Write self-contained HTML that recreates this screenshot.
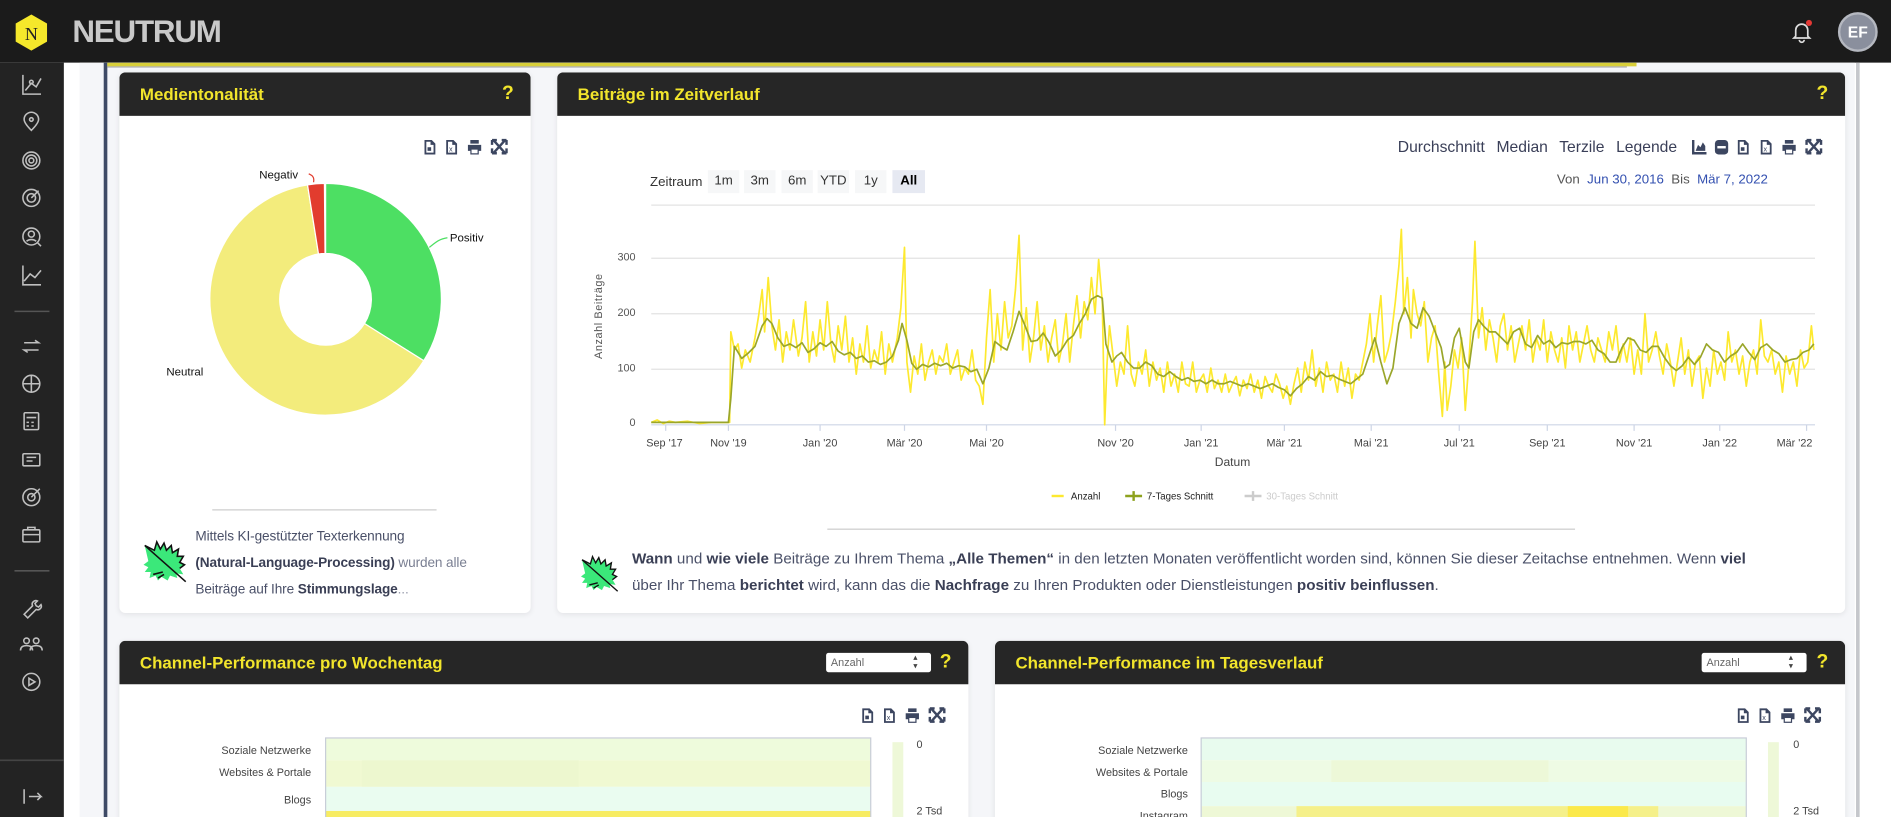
<!DOCTYPE html>
<html><head><meta charset="utf-8">
<style>
*{box-sizing:border-box;margin:0;padding:0}
html,body{width:1891px;height:817px;overflow:hidden;background:#fff}
#s{position:absolute;left:0;top:0;width:1568px;height:677px;transform:scale(1.20599,1.2068);transform-origin:0 0;font-family:"Liberation Sans",sans-serif;background:#fff;overflow:hidden}
.abs{position:absolute}
.hdr{left:0;top:0;width:1568px;height:52px;background:#1b1b1b}
.side{left:0;top:52px;width:53px;height:625px;background:#232323}
.card{position:absolute;background:#fff;border-radius:5px;box-shadow:0 1px 5px rgba(0,0,0,.08);overflow:hidden}
.ch{height:36px;background:#262626;color:#f2e52c;font-weight:bold;font-size:14px;padding:0 0 0 17px;line-height:36px;position:relative}
.q{position:absolute;right:14px;top:0;color:#f2e52c;font-size:16px;font-weight:bold}
.sel{position:absolute;top:10px;width:87px;height:16px;background:#fff;border-radius:2px;font-size:9px;color:#666;line-height:16px;padding-left:4px;font-weight:normal}
.sel:after{content:"▴▾";position:absolute;right:6px;top:0;font-size:7px;letter-spacing:-1px;writing-mode:vertical-lr;color:#444}
.txt{font-size:12px;color:#4a5068;line-height:22px}
.txt b{color:#3a3f55}
.ic{fill:#3c4660}
</style></head><body><div id="s">
<div class="abs hdr"></div>
<svg class="abs" style="left:11px;top:11px" width="30" height="32" viewBox="0 0 30 32"><polygon points="15,1 28,8.5 28,23.5 15,31 2,23.5 2,8.5" fill="#f5e82b"/><text x="15" y="22" text-anchor="middle" font-family="Liberation Serif,serif" font-size="15" fill="#222">N</text></svg>
<div class="abs" style="left:60px;top:11px;font-size:26px;font-weight:bold;color:#c9c9c9;letter-spacing:-1px">NEUTRUM</div>
<svg class="abs" style="left:1484px;top:16px" width="20" height="20" viewBox="0 0 20 20"><path d="M5 14V9a5 5 0 0 1 10 0v5l1.5 1.5h-13z M8 17a2 2 0 0 0 4 0" fill="none" stroke="#ddd" stroke-width="1.4"/><circle cx="16" cy="3" r="2.5" fill="#e53935"/></svg>
<div class="abs" style="left:1524px;top:10px;width:33px;height:33px;border-radius:50%;background:#8a8f9d;border:2px solid #b5b8c0;color:#fff;font-weight:bold;font-size:13px;text-align:center;line-height:29px">EF</div>
<div class="abs side"></div>
<svg class="abs" style="left:0;top:52px" width="53" height="625" viewBox="0 52 53 625" fill="none" stroke="#bfbfbf" stroke-width="1.3">
<path d="M19 62v16h15M21 75l5-6 4 3 4-7"/><circle cx="26" cy="68" r="1.5"/>
<path d="M26 108c-4-4-6-7-6-9a6 6 0 0 1 12 0c0 2-2 5-6 9z"/><circle cx="26" cy="99" r="1.5"/>
<circle cx="26" cy="133" r="7"/><circle cx="26" cy="133" r="4.5"/><circle cx="26" cy="133" r="2"/>
<circle cx="26" cy="164" r="7"/><circle cx="26" cy="164" r="3.5"/><path d="M26 164l6-6"/>
<circle cx="26" cy="196" r="7"/><circle cx="26" cy="194" r="2.5"/><path d="M22 200c2-2 6-2 8 0M31 201l3 3"/>
<path d="M19 220v16h15M20 233l5-6 4 3 5-6"/>
<path d="M12 258h29" stroke="#555"/>
<path d="M20 284h12l-3-2M32 290H20l3 2"/>
<circle cx="26" cy="318" r="7"/><path d="M19 318h14M26 311v14"/>
<rect x="20" y="342" width="12" height="14" rx="1"/><path d="M22 346h8M22 350h2M26 350h2M22 353h2M26 353h2"/>
<rect x="19" y="376" width="14" height="10" rx="1"/><path d="M22 379h8M22 382h5"/>
<circle cx="26" cy="412" r="7"/><circle cx="26" cy="412" r="3"/><path d="M26 412l7-7"/>
<rect x="19" y="439" width="14" height="10" rx="1"/><path d="M23 439v-2h6v2M19 443h14"/>
<path d="M12 473h29" stroke="#555"/>
<path d="M20 509l7-7a3 3 0 0 1 4-4l-2 2 1 2 2 1 2-2a3 3 0 0 1-4 4l-7 7z"/>
<circle cx="22" cy="531" r="2.3"/><circle cx="30" cy="531" r="2.3"/><path d="M17 539c0-3 2-4 5-4s5 1 5 4M25 539c0-3 2-4 5-4s5 1 5 4"/>
<circle cx="26" cy="565" r="7"/><path d="M24 562v6l5-3z"/>
<path d="M0 630h53" stroke="#444"/>
<path d="M20 654v12M24 660h10l-3-3M34 660l-3 3"/>
</svg>
<div class="abs" style="left:53px;top:52px;width:1515px;height:625px;background:#fff"></div>
<div class="abs" style="left:66px;top:52px;width:1472px;height:625px;background:#f5f6f9"></div>
<div class="abs" style="left:86px;top:52px;width:3px;height:625px;background:#3e4a66"></div>
<div class="abs" style="left:89px;top:52px;width:1268px;height:3px;background:#d8cf3a"></div>
<div class="abs" style="left:89px;top:55px;width:1260px;height:1px;background:#aaa"></div>
<div class="abs" style="left:1539px;top:52px;width:3px;height:625px;background:#c5c7cc"></div>

<div class="card" style="left:99px;top:60px;width:341px;height:448px">
<div class="ch">Medientonalität<span class="q">?</span></div>
</div>
<svg class="abs" style="left:350px;top:115px" width="80" height="14" viewBox="0 0 80 14">
<path class="ic" d="M2 1h6l3 3v9H2z M3.5 2.5v9h6V5H7V2.5z"/><rect x="4.5" y="7" width="3" height="3" class="ic"/>
<path class="ic" d="M20 1h6l3 3v9h-9z M21.5 2.5v9h6V5H25V2.5z"/><text x="22.3" y="10.5" font-size="6" fill="#3c4660">x</text>
<path class="ic" d="M40 1h7v3h-7z M38 5h11v5h-2v3h-7v-3h-2z"/><rect x="41" y="9" width="5" height="3" fill="#fff"/>
<path d="M59 1l10 11M69 1L59 12M58 1h4M58 1v4M70 1h-4M70 1v4M58 12h4M58 12v-4M70 12h-4M70 12v-4" stroke="#3c4660" stroke-width="2" fill="none"/>
</svg>
<svg class="abs" style="left:99px;top:96px" width="341" height="300">
<g transform="translate(-99,-96)">
<path d="M270 152A96 96 0 0 1 351.4 298.9L302.2 268.1A38 38 0 0 0 270 210Z" fill="#4ddf63" stroke="#fff" stroke-width="1"/>
<path d="M351.4 298.9A96 96 0 1 1 255 153.2L264.1 210.5A38 38 0 1 0 302.2 268.1Z" fill="#f3ec7c" stroke="#fff" stroke-width="1"/>
<path d="M255 153.2A96 96 0 0 1 269 152L269.5 210A38 38 0 0 0 264.1 210.5Z" fill="#e23c2e" stroke="#fff" stroke-width="1"/>
<path d="M260 151c1-5-2-6-4-7" stroke="#e23c2e" fill="none"/>
<path d="M356 205c5-4 8-7 15-8" stroke="#4ddf63" fill="none"/>
<text x="215" y="148" font-size="9.5" fill="#111">Negativ</text>
<text x="373" y="200" font-size="9.5" fill="#111">Positiv</text>
<text x="138" y="311" font-size="9.5" fill="#111">Neutral</text>
</g></svg>
<div class="abs" style="left:176px;top:422px;width:186px;height:1px;background:#ccc"></div>
<svg class="abs" style="left:117px;top:446px" width="46" height="40" viewBox="0 0 46 40"><path d="M3 6l8 4 2-7 3 6 3-5 2 6 4-4 1 6 5-3-1 6 5 0-3 5 4 2-4 3 3 5-6-1 1 4-6-2-2 4-5-3-3 3-2-4-5 2 1-5-5 0 3-4-4-2 4-3z" fill="#3be87a"/><path d="M3 6l8 4 2-7 3 6 3-5 2 6 4-4 1 6 5-3-1 6 5 0-3 5 4 2-4 3M3 6l34 30M10 30l8-2M14 33l5-3" stroke="#111" stroke-width="1.3" fill="none"/></svg>
<div class="abs txt" style="left:162px;top:434px;width:274px;font-size:11.3px;letter-spacing:-0.1px">Mittels KI-gestützter Texterkennung<br><b>(Natural-Language-Processing)</b> <span style="color:#7a7f92">wurden alle</span><br>Beiträge auf Ihre <b>Stimmungslage</b><span style="color:#9a9eae">...</span></div>

<div class="card" style="left:462px;top:60px;width:1068px;height:448px">
<div class="ch">Beiträge im Zeitverlauf<span class="q">?</span></div>
</div>
<div class="abs" style="left:1159px;top:114px;font-size:13px;color:#3a3f58;word-spacing:6px">Durchschnitt Median Terzile Legende</div>
<svg class="abs" style="left:1402px;top:115px" width="110" height="14" viewBox="0 0 110 14">
<path class="ic" d="M1 1v12h12v-2H3V1z M4 10l2-5 2 2 2-4 2 3v4z"/>
<rect x="20" y="1" width="11" height="12" rx="3" class="ic"/><rect x="22" y="6" width="7" height="2" fill="#fff"/>
<g transform="translate(37,0)"><path class="ic" d="M2 1h6l3 3v9H2z M3.5 2.5v9h6V5H7V2.5z"/><rect x="4.5" y="7" width="3" height="3" class="ic"/></g>
<g transform="translate(38,0)"><path class="ic" d="M20 1h6l3 3v9h-9z M21.5 2.5v9h6V5H25V2.5z"/><text x="22.3" y="10.5" font-size="6" fill="#3c4660">x</text></g>
<g transform="translate(38,0)"><path class="ic" d="M40 1h7v3h-7z M38 5h11v5h-2v3h-7v-3h-2z"/><rect x="41" y="9" width="5" height="3" fill="#fff"/></g>
<g transform="translate(38,0)"><path d="M59 1l10 11M69 1L59 12M58 1h4M58 1v4M70 1h-4M70 1v4M58 12h4M58 12v-4M70 12h-4M70 12v-4" stroke="#3c4660" stroke-width="2" fill="none"/></g>
</svg>
<div class="abs" style="left:539px;top:144px;font-size:11px;color:#333;line-height:14px">Zeitraum</div>
<div class="abs" style="left:587px;top:141px;font-size:11px;color:#333">
<span class="abs" style="left:0;width:26px;height:19px;background:#f6f7f8;text-align:center;line-height:19px">1m</span>
<span class="abs" style="left:30px;width:26px;height:19px;background:#f6f7f8;text-align:center;line-height:19px">3m</span>
<span class="abs" style="left:61px;width:26px;height:19px;background:#f6f7f8;text-align:center;line-height:19px">6m</span>
<span class="abs" style="left:91px;width:26px;height:19px;background:#f6f7f8;text-align:center;line-height:19px">YTD</span>
<span class="abs" style="left:122px;width:26px;height:19px;background:#f6f7f8;text-align:center;line-height:19px">1y</span>
<span class="abs" style="left:153px;width:27px;height:19px;background:#e6e9f2;text-align:center;line-height:19px;font-weight:bold;color:#000">All</span>
</div>
<div class="abs" style="left:1291px;top:143px;font-size:11px;color:#555;white-space:nowrap">Von &nbsp;<span style="color:#3350b0">Jun 30, 2016</span> &nbsp;Bis &nbsp;<span style="color:#3350b0">Mär 7, 2022</span></div>
<svg class="abs" style="left:462px;top:160px" width="1068" height="270">
<g transform="translate(-462,-160)">
<g stroke="#e3e3e3" stroke-width="1"><path d="M540 170H1505M540 214H1505M540 260H1505M540 306H1505"/></g>
<path d="M540 352H1505" stroke="#cdd5e6"/>
<g stroke="#cdd5e6"><path d="M552 352v5M604 352v5M680 352v5M750 352v5M818 352v5M925 352v5M996 352v5M1065 352v5M1137 352v5M1210 352v5M1283 352v5M1355 352v5M1426 352v5M1498 352v5"/></g>
<g font-size="9" fill="#555" text-anchor="end"><text x="527" y="216">300</text><text x="527" y="262">200</text><text x="527" y="308">100</text><text x="527" y="353">0</text></g>
<text transform="translate(499,262) rotate(-90)" font-size="9" fill="#555" text-anchor="middle" letter-spacing="0.5">Anzahl Beiträge</text>
<g font-size="9" fill="#444" text-anchor="middle"><text x="551" y="370">Sep '17</text><text x="604" y="370">Nov '19</text><text x="680" y="370">Jan '20</text><text x="750" y="370">Mär '20</text><text x="818" y="370">Mai '20</text><text x="925" y="370">Nov '20</text><text x="996" y="370">Jan '21</text><text x="1065" y="370">Mär '21</text><text x="1137" y="370">Mai '21</text><text x="1210" y="370">Jul '21</text><text x="1283" y="370">Sep '21</text><text x="1355" y="370">Nov '21</text><text x="1426" y="370">Jan '22</text><text x="1488" y="370">Mär '22</text></g>
<text x="1022" y="386" font-size="10" fill="#444" text-anchor="middle">Datum</text>
<polyline fill="none" stroke="#fde92f" stroke-width="1.4" stroke-linejoin="round" points="540,350 545,348 550,351 555,349 560,350 570,349 580,351 590,350 600,350 605,350 606,275 609,290 612,285 615,305 618,290 622,300 626,280 629,262 632,240 634,275 637,230 640,270 643,290 646,265 649,300 652,275 655,290 658,265 662,295 665,280 668,250 671,300 674,275 677,295 680,265 683,290 686,250 689,285 692,300 695,270 698,290 701,262 704,300 707,280 710,310 713,285 716,300 719,270 722,305 725,290 728,300 731,275 734,310 737,285 740,300 744,280 747,255 750,205 752,300 755,325 758,295 761,310 764,285 767,315 770,300 773,290 776,310 779,295 782,300 785,285 788,310 791,300 794,290 797,315 800,305 803,310 806,290 809,315 812,320 815,335 818,280 821,240 824,300 827,260 830,290 833,250 836,280 839,270 842,240 845,195 848,290 851,255 854,300 857,280 860,250 863,290 866,270 869,300 872,280 875,265 878,300 881,285 884,260 887,300 890,270 893,245 896,280 899,250 902,265 905,230 908,260 911,215 914,250 916,352 918,300 920,270 923,295 926,320 929,300 932,310 935,270 938,310 941,320 944,300 947,310 950,290 953,320 956,300 959,315 962,305 965,325 968,300 971,320 974,310 977,325 980,300 983,318 986,320 989,300 992,325 995,315 998,310 1001,325 1004,305 1007,322 1010,315 1013,325 1016,310 1019,325 1022,318 1025,312 1028,328 1031,315 1034,322 1037,310 1040,325 1043,315 1046,330 1049,312 1052,320 1055,325 1058,310 1061,318 1064,330 1067,320 1070,335 1073,318 1076,305 1079,325 1082,300 1085,315 1088,290 1091,320 1094,305 1097,325 1100,300 1103,315 1106,310 1109,325 1112,300 1115,320 1118,305 1121,330 1124,310 1127,315 1130,300 1133,285 1136,260 1139,300 1142,270 1145,245 1148,300 1151,290 1154,275 1157,250 1160,220 1162,190 1164,260 1167,230 1170,280 1172,240 1175,260 1178,270 1181,250 1184,300 1187,280 1190,270 1193,310 1196,345 1198,300 1200,340 1203,320 1206,290 1209,305 1212,280 1215,340 1218,300 1221,250 1223,200 1226,280 1229,255 1232,290 1235,265 1238,280 1241,300 1244,270 1247,260 1250,290 1253,270 1256,300 1259,285 1262,270 1265,290 1268,265 1271,300 1274,280 1277,290 1280,265 1283,300 1286,275 1289,290 1292,300 1295,280 1298,305 1301,270 1304,290 1307,275 1310,300 1313,285 1316,270 1319,290 1322,300 1325,280 1328,290 1331,300 1334,275 1337,290 1340,270 1343,300 1346,285 1349,300 1352,280 1355,310 1358,290 1361,310 1364,260 1367,300 1370,290 1373,275 1376,295 1379,310 1382,285 1385,300 1388,320 1391,300 1394,280 1397,310 1400,290 1403,320 1406,300 1409,295 1412,330 1415,305 1418,320 1421,290 1424,310 1427,300 1430,315 1433,275 1436,300 1439,290 1442,310 1445,295 1448,320 1451,300 1454,290 1457,310 1460,265 1463,295 1466,300 1469,290 1472,310 1475,300 1478,325 1481,295 1484,310 1487,300 1490,320 1493,290 1496,305 1499,300 1502,270 1504,290"/>
<polyline fill="none" stroke="#9aa62a" stroke-width="1.4" stroke-linejoin="round" points="540,350 604,350 606,330 609,287 615,297 620,293 626,287 632,270 636,264 640,268 645,280 650,287 655,285 660,288 665,284 670,292 675,289 680,284 685,287 690,283 695,291 700,294 705,292 710,297 715,295 720,300 725,299 730,302 735,300 740,295 745,282 748,268 752,282 756,301 760,306 765,302 770,304 775,301 780,303 785,301 790,305 795,303 800,304 805,308 810,306 815,318 820,305 825,283 830,287 835,290 840,275 845,258 850,270 855,283 860,282 865,276 870,284 875,295 880,290 885,282 890,278 895,268 900,260 905,248 910,245 914,247 917,285 922,300 926,295 930,292 935,300 940,305 945,305 950,300 955,303 960,310 965,312 970,308 975,312 980,315 985,313 990,316 995,315 1000,318 1005,315 1010,318 1015,318 1020,316 1025,318 1030,320 1035,318 1040,320 1045,322 1050,320 1055,318 1060,321 1065,323 1070,328 1075,322 1080,318 1085,312 1090,315 1095,308 1100,312 1105,311 1110,314 1115,316 1120,318 1125,314 1130,310 1135,295 1140,280 1145,300 1150,318 1155,305 1160,268 1165,255 1170,268 1175,272 1180,255 1185,262 1190,275 1195,288 1198,305 1202,302 1206,280 1210,272 1215,300 1218,305 1222,275 1226,265 1230,270 1235,275 1240,275 1245,280 1250,285 1255,275 1260,272 1265,285 1270,288 1275,278 1280,285 1285,282 1290,288 1295,284 1300,285 1305,283 1310,283 1315,285 1320,282 1325,290 1330,293 1335,300 1340,300 1345,288 1350,280 1355,282 1360,290 1365,292 1370,287 1375,287 1380,296 1385,303 1390,307 1395,303 1400,296 1405,302 1410,296 1415,285 1420,290 1425,292 1430,300 1435,295 1440,292 1445,285 1450,292 1455,298 1460,288 1465,285 1470,290 1475,293 1480,300 1485,298 1490,297 1495,292 1500,290 1504,285"/>
<g font-size="8" fill="#222"><path d="M872 411h10" stroke="#fde92f" stroke-width="2"/><text x="888" y="414">Anzahl</text>
<path d="M933 411h14M940 407v8" stroke="#8ea21e" stroke-width="2"/><text x="951" y="414">7-Tages Schnitt</text>
<path d="M1032 411h14M1039 407v8" stroke="#ccc" stroke-width="2"/><text x="1050" y="414" fill="#ccc">30-Tages Schnitt</text></g>
</g></svg>
<div class="abs" style="left:686px;top:438px;width:620px;height:1px;background:#ccc"></div>
<svg class="abs" style="left:480px;top:456px" width="40" height="40" viewBox="0 0 46 40"><path d="M3 6l8 4 2-7 3 6 3-5 2 6 4-4 1 6 5-3-1 6 5 0-3 5 4 2-4 3 3 5-6-1 1 4-6-2-2 4-5-3-3 3-2-4-5 2 1-5-5 0 3-4-4-2 4-3z" fill="#3be87a"/><path d="M3 6l8 4 2-7 3 6 3-5 2 6 4-4 1 6 5-3-1 6 5 0-3 5 4 2-4 3M3 6l34 30M10 30l8-2M14 33l5-3" stroke="#111" stroke-width="1.3" fill="none"/></svg>
<div class="abs txt" style="left:524px;top:452px;width:985px;line-height:22px;font-size:12.6px"><b>Wann</b> und <b>wie viele</b> Beiträge zu Ihrem Thema <b>„Alle Themen“</b> in den letzten Monaten veröffentlicht worden sind, können Sie dieser Zeitachse entnehmen. Wenn <b>viel</b><br>über Ihr Thema <b>berichtet</b> wird, kann das die <b>Nachfrage</b> zu Ihren Produkten oder Dienstleistungen <b>positiv beinflussen</b>.</div>

<div class="card" style="left:99px;top:531px;width:704px;height:160px">
<div class="ch">Channel-Performance pro Wochentag<span class="sel" style="left:586px">Anzahl</span><span class="q">?</span></div>
</div>
<div class="card" style="left:825px;top:531px;width:705px;height:160px">
<div class="ch">Channel-Performance im Tagesverlauf<span class="sel" style="left:586px">Anzahl</span><span class="q">?</span></div>
</div>
<svg class="abs" style="left:713px;top:586px" width="80" height="14" viewBox="0 0 80 14">
<path class="ic" d="M2 1h6l3 3v9H2z M3.5 2.5v9h6V5H7V2.5z"/><rect x="4.5" y="7" width="3" height="3" class="ic"/>
<path class="ic" d="M20 1h6l3 3v9h-9z M21.5 2.5v9h6V5H25V2.5z"/><text x="22.3" y="10.5" font-size="6" fill="#3c4660">x</text>
<path class="ic" d="M40 1h7v3h-7z M38 5h11v5h-2v3h-7v-3h-2z"/><rect x="41" y="9" width="5" height="3" fill="#fff"/>
<path d="M59 1l10 11M69 1L59 12M58 1h4M58 1v4M70 1h-4M70 1v4M58 12h4M58 12v-4M70 12h-4M70 12v-4" stroke="#3c4660" stroke-width="2" fill="none"/>
</svg>
<svg class="abs" style="left:1439px;top:586px" width="80" height="14" viewBox="0 0 80 14">
<path class="ic" d="M2 1h6l3 3v9H2z M3.5 2.5v9h6V5H7V2.5z"/><rect x="4.5" y="7" width="3" height="3" class="ic"/>
<path class="ic" d="M20 1h6l3 3v9h-9z M21.5 2.5v9h6V5H25V2.5z"/><text x="22.3" y="10.5" font-size="6" fill="#3c4660">x</text>
<path class="ic" d="M40 1h7v3h-7z M38 5h11v5h-2v3h-7v-3h-2z"/><rect x="41" y="9" width="5" height="3" fill="#fff"/>
<path d="M59 1l10 11M69 1L59 12M58 1h4M58 1v4M70 1h-4M70 1v4M58 12h4M58 12v-4M70 12h-4M70 12v-4" stroke="#3c4660" stroke-width="2" fill="none"/>
</svg>
<svg class="abs" style="left:99px;top:600px" width="1431" height="77">
<g transform="translate(-99,-600)">
<g font-size="9" fill="#444" text-anchor="end"><text x="258" y="625">Soziale Netzwerke</text><text x="258" y="643">Websites &amp; Portale</text><text x="258" y="666">Blogs</text></g>
<rect x="270" y="612" width="452" height="18" fill="#eefbdc"/><rect x="270" y="630" width="452" height="22" fill="#f0f9d2"/><rect x="300" y="630" width="180" height="22" fill="#edf7cf"/>
<rect x="270" y="652" width="452" height="20" fill="#eafcf0"/><rect x="270" y="672" width="452" height="10" fill="#f7ec62"/>
<rect x="270" y="611.5" width="452" height="70" fill="none" stroke="#c8cdd8"/>
<rect x="740" y="615" width="9" height="62" fill="#eef8d8"/>
<text x="760" y="620" font-size="9" fill="#444">0</text><text x="760" y="675" font-size="9" fill="#444">2 Tsd</text>
<g font-size="9" fill="#444" text-anchor="end"><text x="985" y="625">Soziale Netzwerke</text><text x="985" y="643">Websites &amp; Portale</text><text x="985" y="661">Blogs</text><text x="985" y="679">Instagram</text></g>
<rect x="996" y="612" width="452" height="18" fill="#e8fbee"/><rect x="996" y="630" width="452" height="18" fill="#eefbe4"/><rect x="1104" y="630" width="180" height="18" fill="#edf8d8"/>
<rect x="996" y="648" width="452" height="20" fill="#e8fcf0"/><rect x="996" y="668" width="452" height="12" fill="#eef8d6"/>
<rect x="1075" y="668" width="300" height="12" fill="#f5f08a"/><rect x="1300" y="668" width="50" height="12" fill="#fbe94a"/>
<rect x="996" y="611.5" width="452" height="70" fill="none" stroke="#c8cdd8"/>
<rect x="1466" y="615" width="9" height="62" fill="#eef8d8"/>
<text x="1487" y="620" font-size="9" fill="#444">0</text><text x="1487" y="675" font-size="9" fill="#444">2 Tsd</text>
</g></svg>
</div></body></html>
